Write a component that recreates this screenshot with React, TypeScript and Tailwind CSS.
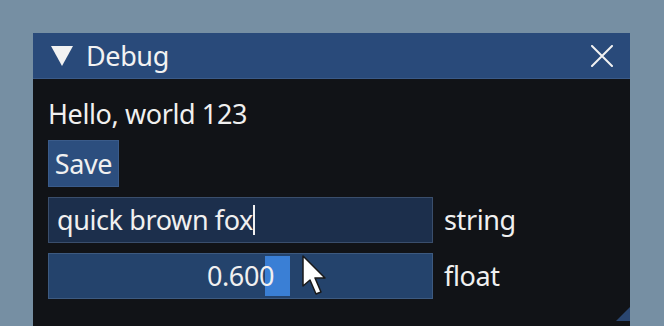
import React from "react";

function CloseX() {
  return (
    <svg width="24" height="22" viewBox="0 0 24 22" className="block">
      <path d="M2 1 L22 21 M22 1 L2 21" stroke="#f2f2f2" strokeWidth="2" strokeLinecap="round" />
    </svg>
  );
}

function Arrow() {
  return (
    <svg width="28" height="42" viewBox="0 0 28 42" className="block">
      <path
        d="M2 1 L2 31 L9 25 L15 39 L20 37 L14 23 L24 23 Z"
        fill="#ffffff"
        stroke="#1a1a1a"
        strokeWidth="1.5"
        strokeLinejoin="round"
      />
    </svg>
  );
}

export default function App() {
  const font = { fontFamily: '"Noto Sans", "Open Sans", sans-serif' };
  return (
    <div className="w-[664px] h-[326px] bg-[#768fa3] overflow-hidden relative" style={font}>
      <div className="ml-[33px] mt-[33px] w-[597px] h-[320px] flex flex-col relative">
        {/* Title bar */}
        <div className="h-[46px] bg-[#294a7a] border-b border-[#3a5a88] flex items-center pl-[18px] pr-[16px] text-[#f2f2f2]">
          <svg width="22" height="20" viewBox="0 0 22 20" className="block">
            <path d="M0 0 L22 0 L11 20 Z" fill="#f2f2f2" />
          </svg>
          <span className="ml-[13px] text-[27px] leading-[30px] tracking-[-0.4px]">Debug</span>
          <div className="ml-auto">
            <CloseX />
          </div>
        </div>
        {/* Body */}
        <div className="flex-1 bg-[#111317] px-[15px] pt-[20px] text-[#f0f0f0] text-[27px] leading-[30px] tracking-[-0.4px] relative">
          <div>Hello, world 123</div>
          <div className="mt-[11px] w-[71px] h-[47px] bg-[#2c4e7e] border border-[#3a5b8a] flex items-center justify-center">
            Save
          </div>
          <div className="mt-[10px] flex items-center">
            <div className="w-[385px] h-[46px] bg-[#1c2f4c] border border-[#3a4e6c] flex items-center pl-[8px]">
              <span>quick brown fox</span>
              <span className="w-[2px] h-[30px] bg-[#f0f0f0]" />
            </div>
            <span className="ml-[11px]">string</span>
          </div>
          <div className="mt-[10px] flex items-center">
            <div className="w-[385px] h-[46px] bg-[#24436c] border border-[#3d5a80] relative flex items-center justify-center">
              <div className="absolute left-[216px] top-[2px] w-[25px] h-[40px] bg-[#3a7fd5]" />
              <span className="relative">0.600</span>
            </div>
            <span className="ml-[11px]">float</span>
          </div>
          {/* resize grip */}
          <svg width="14" height="14" viewBox="0 0 14 14" className="absolute right-0 top-[228px] block">
            <path d="M14 0 L14 14 L0 14 Z" fill="#2a4670" />
          </svg>
        </div>
      </div>
      {/* mouse cursor */}
      <div className="absolute left-[301px] top-[255px]">
        <Arrow />
      </div>
    </div>
  );
}
